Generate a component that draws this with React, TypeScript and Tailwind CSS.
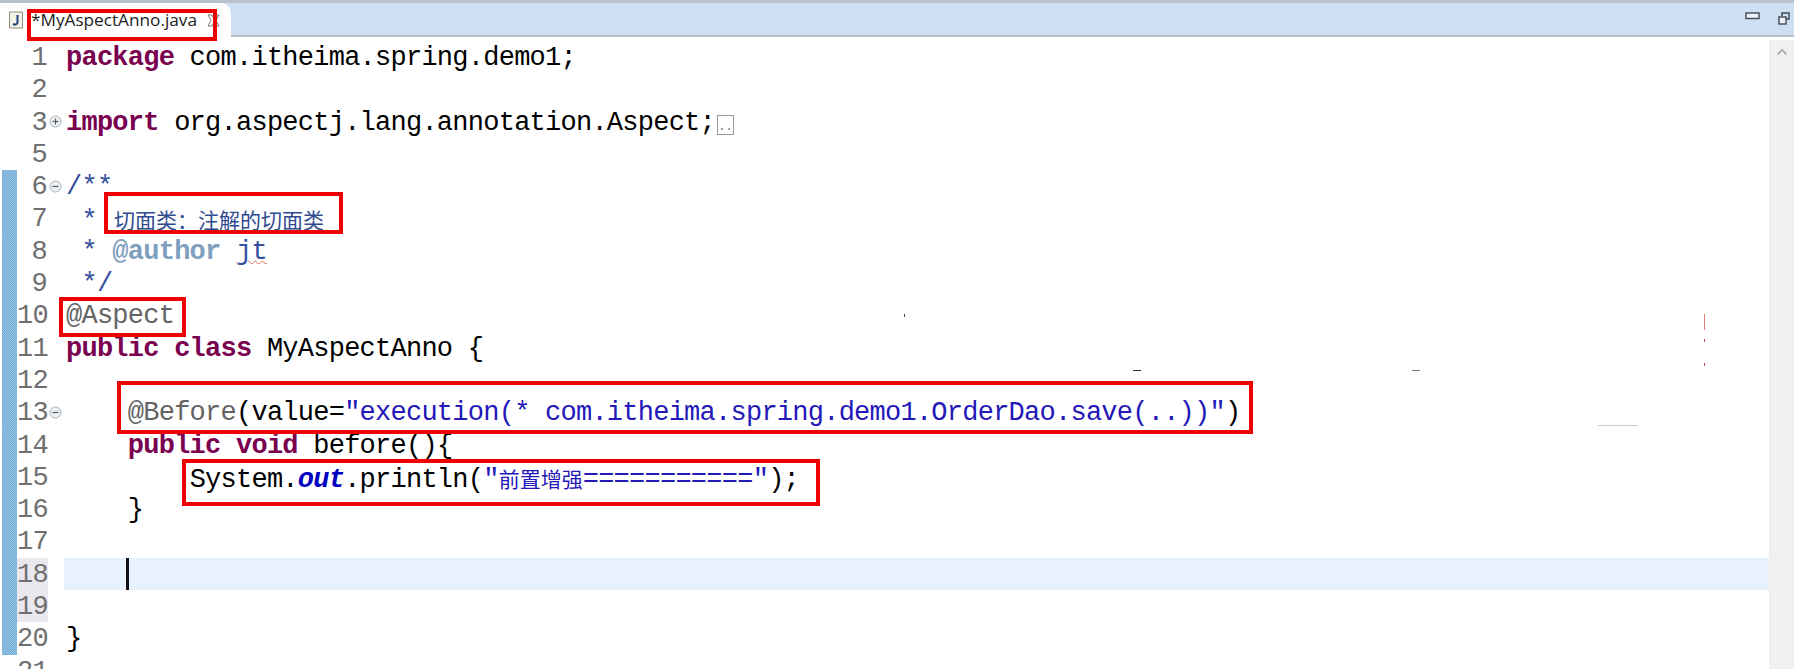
import React from "react";

const Kw = ({ children }: { children: React.ReactNode }) => (
    <span className="font-bold text-[#7a0050]">{children}</span>
);
const Str = ({ children }: { children: React.ReactNode }) => (
    <span className="text-[#2418b8]">{children}</span>
);
const Anno = ({ children }: { children: React.ReactNode }) => (
    <span className="text-[#646464]">{children}</span>
);
const Doc = ({ children }: { children: React.ReactNode }) => (
    <span className="text-[#34509f]">{children}</span>
);
const Cjk = ({ children, color }: { children: React.ReactNode; color: string }) => (
    <span
        className={`text-[21px] tracking-normal font-['Noto_Sans_CJK_SC',sans-serif] ${color}`}
    >
        {children}
    </span>
);

const FoldIcon = ({ open }: { open: boolean }) => (
    <svg width="13" height="13" viewBox="0 0 13 13">
        <circle cx="6.5" cy="6.5" r="5.5" fill="#eef1f4" stroke="#a8b0b8" strokeWidth="1" />
        <path d="M3.5 6.5h6" stroke="#55606a" strokeWidth="1.2" />
        {open && <path d="M6.5 3.5v6" stroke="#55606a" strokeWidth="1.2" />}
    </svg>
);

type Line = {
    no: number;
    fold?: "open" | "close";
    band?: boolean;
    active?: boolean;
    ruler?: boolean;
    code?: React.ReactNode;
};

const lines: Line[] = [
    { no: 1, code: <><Kw>package</Kw> com.itheima.spring.demo1;</> },
    { no: 2 },
    {
        no: 3,
        fold: "open",
        code: (
            <>
                <Kw>import</Kw> org.aspectj.lang.annotation.Aspect;
                <span className="ml-[2px] inline-block h-[20px] w-[17px] border border-[#9a9a9a] text-center align-baseline text-[12px] leading-[22px] tracking-normal text-[#777]">
                    ..
                </span>
            </>
        ),
    },
    { no: 5 },
    { no: 6, fold: "close", band: true, code: <Doc>/**</Doc> },
    {
        no: 7,
        band: true,
        code: (
            <>
                <Doc>&nbsp;*</Doc>
                <span className="ml-[17px] inline-block">
                    <Cjk color="text-[#2f4a8f]">{"切面类\uFF1A注解的切面类"}</Cjk>
                </span>
            </>
        ),
    },
    {
        no: 8,
        band: true,
        code: (
            <>
                <Doc>&nbsp;* </Doc>
                <span className="font-bold text-[#7f9fbf]">@author</span>{" "}
                <span className="text-[#34509f] underline decoration-[#d9705a] decoration-wavy decoration-1">
                    jt
                </span>
            </>
        ),
    },
    { no: 9, band: true, code: <Doc>&nbsp;*/</Doc> },
    { no: 10, band: true, code: <Anno>@Aspect</Anno> },
    { no: 11, band: true, code: <><Kw>public</Kw> <Kw>class</Kw> MyAspectAnno {"{"}</> },
    { no: 12, band: true },
    {
        no: 13,
        fold: "close",
        band: true,
        code: (
            <>
                {"    "}
                <Anno>@Before</Anno>(value=
                <Str>"execution(* com.itheima.spring.demo1.OrderDao.save(..))"</Str>)
            </>
        ),
    },
    { no: 14, band: true, code: <>{"    "}<Kw>public</Kw> <Kw>void</Kw> before(){"{"}</> },
    {
        no: 15,
        band: true,
        code: (
            <>
                {"        "}System.
                <span className="font-bold italic text-[#0000c0]">out</span>.println(
                <Str>"</Str>
                <Cjk color="text-[#2418b8]">前置增强</Cjk>
                <Str>==========="</Str>);
            </>
        ),
    },
    { no: 16, band: true, code: <>{"    }"}</> },
    { no: 17, band: true },
    { no: 18, band: true, active: true, ruler: true },
    { no: 19, band: true, ruler: true },
    { no: 20, band: true, code: <>{"}"}</> },
    { no: 21 },
];

const Row = ({ line }: { line: Line }) => (
    <div className="flex h-[32.3px] shrink-0 pl-[2px]">
        <div
            className={`w-[15px] ${line.band ? "bg-[repeating-conic-gradient(#74aed9_0%_25%,#94c2e3_0%_50%)] bg-[length:2px_2px]" : ""}`}
        />
        <div
            className={`w-[31px] pr-[1px] text-right text-[#6f6f6f] ${line.ruler ? "bg-[#e9e8ee]" : ""}`}
        >
            {line.no}
        </div>
        <div className="flex w-[16px] items-center pl-[1px]">
            {line.fold && <FoldIcon open={line.fold === "open"} />}
        </div>
        <div
            className={`relative flex-1 whitespace-pre pl-[2px] text-black ${line.active ? "bg-[#e8f2fe]" : ""}`}
        >
            {line.code}
            {line.active && (
                <span className="absolute left-[62px] top-0 h-full w-[2.5px] bg-[#111]" />
            )}
        </div>
    </div>
);

// red annotation boxes drawn on top of the editor
const marks = [
    "left-[27px] top-[9px] h-[32px] w-[190px]",
    "left-[104px] top-[192px] h-[42px] w-[239px]",
    "left-[59px] top-[297px] h-[40px] w-[127px]",
    "left-[117px] top-[381px] h-[53px] w-[1136px]",
    "left-[182px] top-[459px] h-[47px] w-[638px]",
];

const specks = [
    "left-[904px] top-[314px] h-[3px] w-[1px] bg-[#444]",
    "left-[1704px] top-[314px] h-[16px] w-[1px] bg-[#e08070]",
    "left-[1704px] top-[339px] h-[3px] w-[1px] bg-[#c04060]",
    "left-[1704px] top-[363px] h-[3px] w-[1px] bg-[#c04060]",
    "left-[1412px] top-[370px] h-[1px] w-[8px] bg-[#777]",
    "left-[1133px] top-[370px] h-[1px] w-[8px] bg-[#333]",
    "left-[1598px] top-[425px] h-[1px] w-[40px] bg-[#ccc]",
];

export default function App() {
    return (
        <div className="relative flex h-[669px] w-[1794px] flex-col overflow-hidden bg-white">
            <div className="flex h-[37px] shrink-0 items-stretch border-t-[3px] border-b-[2px] border-t-[#b9c1cf] border-b-[#b8bec6] bg-[#cddff0]">
                <div className="-mb-[2px] flex w-[231px] items-center rounded-tr-[10px] bg-white pl-[8px]">
                    <svg width="16" height="18" viewBox="0 0 16 18" className="shrink-0">
                        <path d="M1.5 1h13v16h-13z" fill="#f4f2e6" stroke="#8f8f80" />
                        <path d="M9.5 4v7.5c0 2-2.5 2.5-4.5 1.5" fill="none" stroke="#1f3f78" strokeWidth="2" />
                    </svg>
                    <span className="ml-[7px] font-['Open_Sans',sans-serif] text-[17.2px] leading-none text-[#222]">
                        *MyAspectAnno.java
                    </span>
                    <svg width="15" height="15" viewBox="0 0 15 15" className="ml-[9px] shrink-0">
                        <path d="M2 2l4 0 1.5 3 1.5-3 4 0-3 5.5 3 5.5-4 0-1.5-3-1.5 3-4 0 3-5.5z" fill="#fff" stroke="#777" />
                    </svg>
                </div>
                <div className="flex flex-1 items-start justify-end gap-[18px] pr-[4px] pt-[9px]">
                    <svg width="15" height="8" viewBox="0 0 15 8">
                        <rect x="1" y="1" width="13" height="5.5" fill="#eef3f8" stroke="#3c4654" strokeWidth="1.4" />
                    </svg>
                    <svg width="12" height="13" viewBox="0 0 12 13">
                        <path d="M4 4V1h7v6H8" fill="none" stroke="#3c4654" strokeWidth="1.4" />
                        <rect x="1" y="5" width="7" height="7" fill="#eef3f8" stroke="#3c4654" strokeWidth="1.4" />
                    </svg>
                </div>
            </div>
            <div className="flex min-h-0 flex-1">
                <div className="min-w-0 flex-1 overflow-hidden pt-[4px] font-['Liberation_Mono',monospace] text-[27px] leading-[34px] tracking-[-0.75px]">
                    {lines.map((line) => (
                        <Row key={line.no} line={line} />
                    ))}
                </div>
                <div className="mt-[3px] flex w-[25px] shrink-0 justify-center bg-[#f0f0f0] pt-[8px]">
                    <svg width="12" height="8" viewBox="0 0 12 8">
                        <path d="M1.5 6.5L6 2l4.5 4.5" fill="none" stroke="#b4b4b4" strokeWidth="2" />
                    </svg>
                </div>
            </div>
            {specks.map((s) => (
                <div key={s} className={`absolute ${s}`} />
            ))}
            {marks.map((m) => (
                <div key={m} className={`pointer-events-none absolute border-[4px] border-[#f00000] ${m}`} />
            ))}
        </div>
    );
}
